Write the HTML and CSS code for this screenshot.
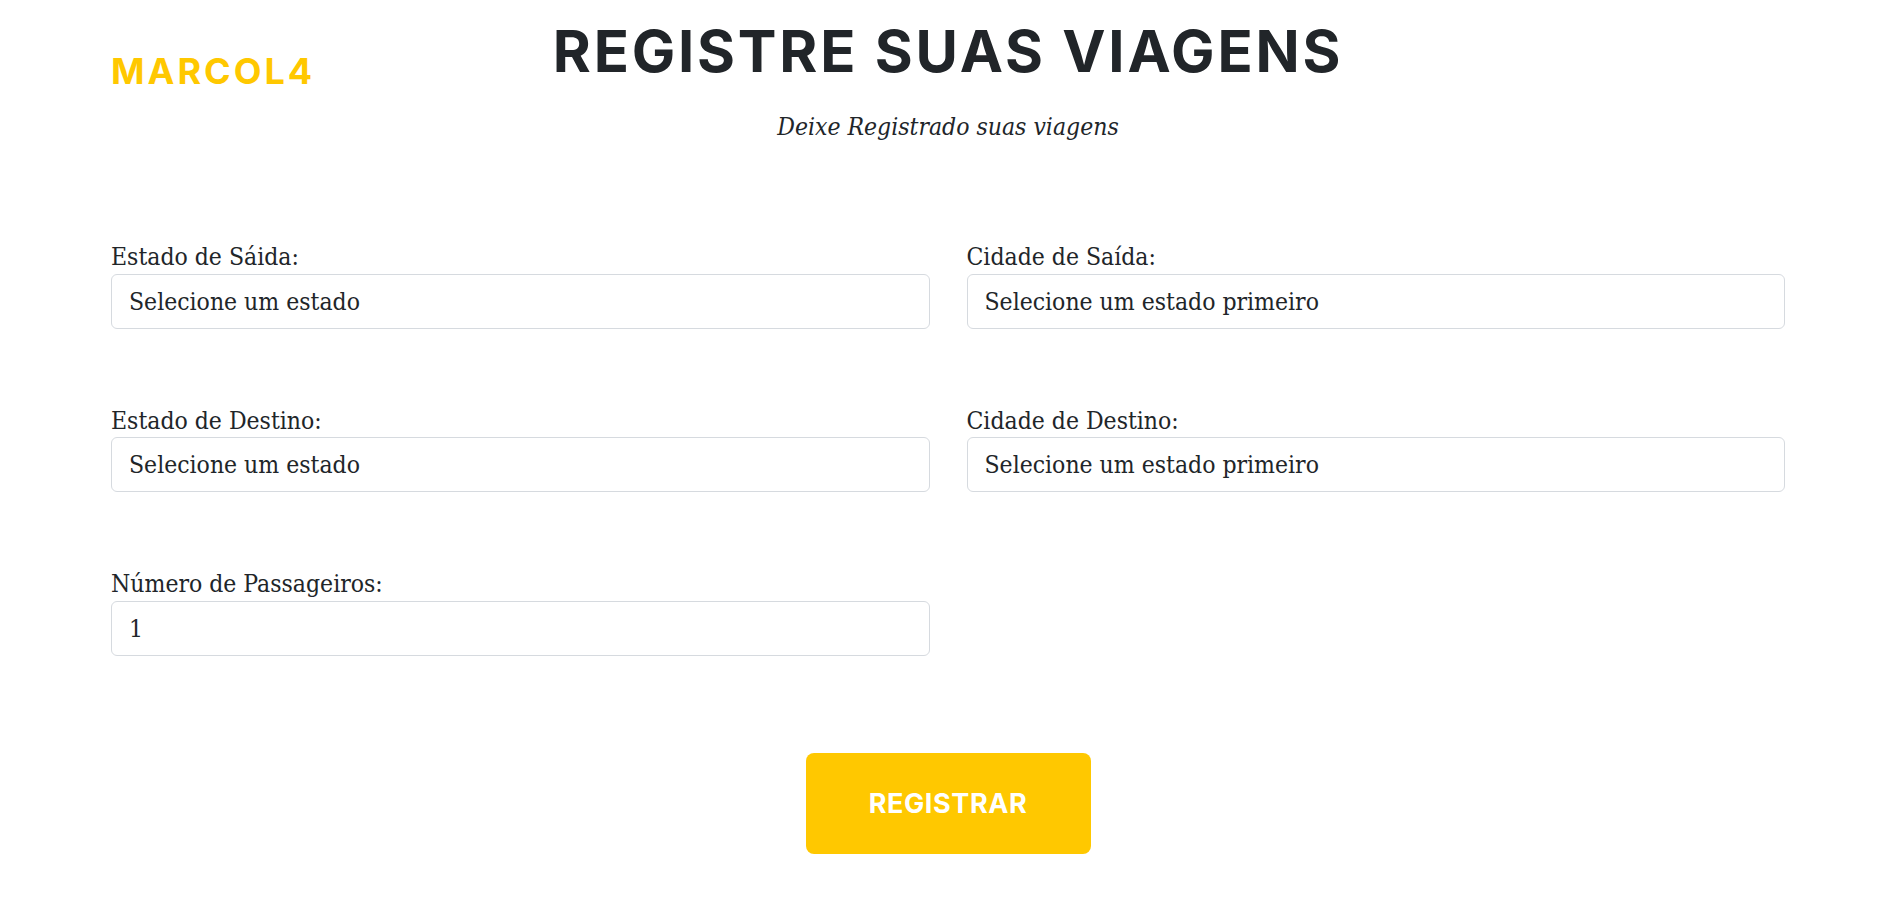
FILE: index.html
```html
<!DOCTYPE html>
<html lang="pt-BR">
<head>
<meta charset="utf-8">
<title>Registre suas viagens</title>
<link rel="stylesheet" href="styles.css">
</head>
<body>
<div class="page">
  <header class="header">
    <div class="logo">MARCOL4</div>
    <div class="heading">
      <h1 class="title">REGISTRE SUAS VIAGENS</h1>
      <p class="subtitle">Deixe Registrado suas viagens</p>
    </div>
    <div class="spacer"></div>
  </header>

  <form class="form">
    <div class="field">
      <label class="label" for="estado-saida">Estado de Sáida:</label>
      <select class="control" id="estado-saida"><option>Selecione um estado</option></select>
    </div>
    <div class="field">
      <label class="label" for="cidade-saida">Cidade de Saída:</label>
      <select class="control" id="cidade-saida"><option>Selecione um estado primeiro</option></select>
    </div>
    <div class="field">
      <label class="label" for="estado-destino">Estado de Destino:</label>
      <select class="control" id="estado-destino"><option>Selecione um estado</option></select>
    </div>
    <div class="field">
      <label class="label" for="cidade-destino">Cidade de Destino:</label>
      <select class="control" id="cidade-destino"><option>Selecione um estado primeiro</option></select>
    </div>
    <div class="field">
      <label class="label" for="passageiros">Número de Passageiros:</label>
      <input class="control" id="passageiros" type="number" value="1" min="1">
    </div>
  </form>

  <div class="actions">
    <button class="btn" type="button">REGISTRAR</button>
  </div>
</div>
</body>
</html>
```

FILE: styles.css
```css
* {
  box-sizing: border-box;
}

html, body {
  margin: 0;
  padding: 0;
  background: #ffffff;
}

body {
  font-family: "DejaVu Serif", serif;
  color: #212529;
}

.page {
  padding: 22px 104px 40px 111px;
}

.header {
  display: grid;
  grid-template-columns: 1fr auto 1fr;
  align-items: start;
}

.logo {
  margin-top: 31px;
  font-family: "Inter", "DejaVu Sans", sans-serif;
  font-weight: 700;
  font-size: 36px;
  line-height: 1;
  letter-spacing: 3px;
  color: #ffc800;
}

.heading {
  text-align: center;
}

.title {
  margin: 0;
  font-family: "Inter", "DejaVu Sans", sans-serif;
  font-weight: 700;
  font-size: 58px;
  line-height: 1;
  letter-spacing: 2.8px;
  color: #212529;
}

.subtitle {
  margin: 32px 0 0;
  font-family: "DejaVu Serif", serif;
  font-style: italic;
  font-stretch: condensed;
  font-size: 24.5px;
  line-height: 1.2;
  color: #212529;
}

.form {
  margin-top: 101px;
  display: grid;
  grid-template-columns: 1fr 1fr;
  column-gap: 37px;
  row-gap: 77px;
}

.field {
  display: flex;
  flex-direction: column;
}

.label {
  font-family: "DejaVu Serif", serif;
  font-stretch: condensed;
  font-size: 24.5px;
  line-height: 1.2;
  margin-bottom: 2px;
  color: #212529;
}

.control {
  -webkit-appearance: none;
  appearance: none;
  height: 55px;
  width: 100%;
  padding: 0 17px;
  border: 1px solid #d6dadf;
  border-radius: 6px;
  background: #ffffff;
  font-family: "DejaVu Serif", serif;
  font-stretch: condensed;
  font-size: 24.5px;
  color: #212529;
  outline: none;
}

.control::-webkit-inner-spin-button,
.control::-webkit-outer-spin-button {
  -webkit-appearance: none;
  margin: 0;
}

.actions {
  margin-top: 97px;
  display: flex;
  justify-content: center;
}

.btn {
  width: 285px;
  height: 101px;
  border: none;
  border-radius: 8px;
  background: #ffc800;
  color: #ffffff;
  font-family: "Inter", "DejaVu Sans", sans-serif;
  font-weight: 700;
  font-size: 27px;
  letter-spacing: 0.6px;
  cursor: pointer;
}
```
